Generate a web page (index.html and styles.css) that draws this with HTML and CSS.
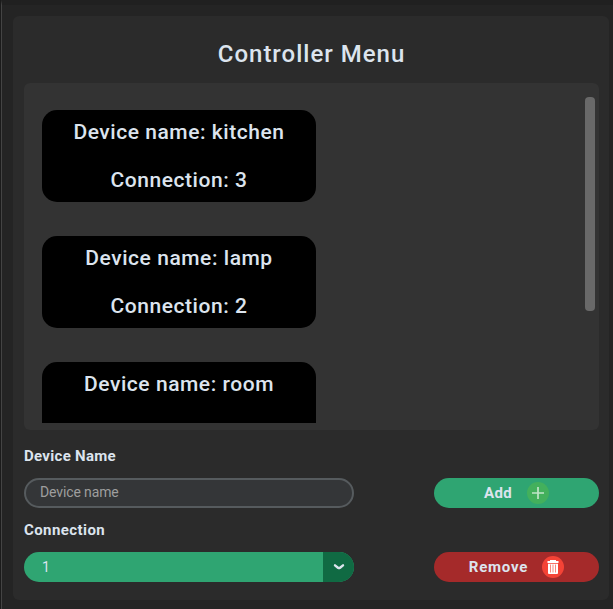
FILE: index.html
```html
<!DOCTYPE html>
<html lang="en">
<head>
<meta charset="utf-8">
<title>Controller Menu</title>
<link rel="stylesheet" href="styles.css">
</head>
<body>
<div class="window">
  <main class="panel">
    <h1 class="title">Controller Menu</h1>
    <section class="list">
      <div class="cards">
        <article class="card"><p>Device name: kitchen</p><p>Connection: 3</p></article>
        <article class="card"><p>Device name: lamp</p><p>Connection: 2</p></article>
        <article class="card"><p>Device name: room</p></article>
      </div>
      <div class="track"><div class="thumb"></div></div>
    </section>
    <div class="label">Device Name</div>
    <div class="row">
      <input class="field" type="text" placeholder="Device name">
      <button class="btn add"><span>Add</span>
        <svg width="22" height="22" viewBox="0 0 22 22"><circle cx="11" cy="11" r="11" fill="#43b05c"/><path d="M11 5v12M5 11h12" stroke="#c0e5c7" stroke-width="1.7"/></svg>
      </button>
    </div>
    <div class="label second">Connection</div>
    <div class="row">
      <div class="select"><span class="value">1</span><span class="arrow">
        <svg width="12" height="8" viewBox="0 0 12 8"><path d="M2 2.3L4.9 4.7q1.1.7 2.2 0L10 2.3" fill="none" stroke="#dce4ee" stroke-width="2.4" stroke-linecap="round"/></svg>
      </span></div>
      <button class="btn remove"><span>Remove</span>
        <svg width="22" height="22" viewBox="0 0 22 22"><circle cx="11" cy="11" r="11" fill="#f44336"/><path d="M8 4h6v1h2.5v2h-11V5H8z" fill="#fff"/><path d="M6 7.7h10V17q0 1-1 1H7q-1 0-1-1z" fill="#fff"/><path d="M8.5 8.5v8M11 8.5v8M13.5 8.5v8" stroke="#f7897f" stroke-width="1"/></svg>
      </button>
    </div>
  </main>
</div>
</body>
</html>
```
FILE: styles.css
```css
* { box-sizing: border-box; }
body {
  margin: 0;
  height: 609px;
  overflow: hidden;
  background: #1b1b1b;
  color: #dce4ee;
  font-family: Roboto, sans-serif;
}
.window {
  height: 609px;
  margin-left: 1px;
  padding: 11px 4px 0 11px;
  border-left: 1px solid #444;
  border-top: 5px solid #202020;
  background: #242424;
}
.panel {
  height: 584px;
  padding: 0 10px 0 11px;
  border-radius: 6px;
  background: #2b2b2b;
}
.title {
  margin: 0;
  height: 67px;
  padding-top: 8px;
  font-size: 24px;
  line-height: 60px;
  font-weight: 500;
  letter-spacing: 1px;
  text-align: center;
}
.list {
  display: flex;
  justify-content: space-between;
  height: 347px;
  padding: 14px 4px 7px 18px;
  border-radius: 6px;
  background: #333;
}
.cards {
  height: 326px;
  padding-top: 13px;
  overflow: hidden;
}
.card {
  width: 274px;
  height: 92px;
  margin-bottom: 34px;
  border-radius: 15px;
  background: #000;
  font-size: 21px;
  font-weight: 500;
  letter-spacing: 0.55px;
  text-align: center;
}
.card p { margin: 0; height: 48px; line-height: 44px; }
.track { width: 10px; }
.thumb { width: 10px; height: 214px; border-radius: 4px; background: #696969; }
.label {
  height: 48px;
  padding-top: 16px;
  font-size: 15px;
  line-height: 20px;
  font-weight: 700;
  letter-spacing: 0.3px;
}
.label.second { height: 44px; padding-top: 12px; letter-spacing: 0.42px; }
.row { display: flex; justify-content: space-between; height: 30px; }
.field {
  width: 330px;
  height: 30px;
  padding: 0 14px 2px;
  border: 2px solid #565b5e;
  border-radius: 15px;
  background: #343638;
  color: #dce4ee;
  font: 14px Roboto, sans-serif;
  letter-spacing: -0.12px;
}
.field::placeholder { color: #9e9e9e; }
.btn {
  display: flex;
  align-items: center;
  justify-content: center;
  gap: 15px;
  width: 165px;
  height: 30px;
  padding: 0;
  border: 0;
  border-radius: 15px;
  color: #dce4ee;
  font: 700 15px Roboto, sans-serif;
  letter-spacing: 0.3px;
}
.add { background: #2fa572; }
.remove { background: #a52a2a; gap: 14px; letter-spacing: 0.8px; }
.select {
  display: flex;
  width: 330px;
  height: 30px;
  border-radius: 15px;
  overflow: hidden;
  background: #2fa572;
}
.value { flex: 1; padding-left: 18px; font-size: 14px; line-height: 30px; }
.arrow {
  display: flex;
  align-items: center;
  justify-content: center;
  width: 31px;
  background: #106a43;
}
```
